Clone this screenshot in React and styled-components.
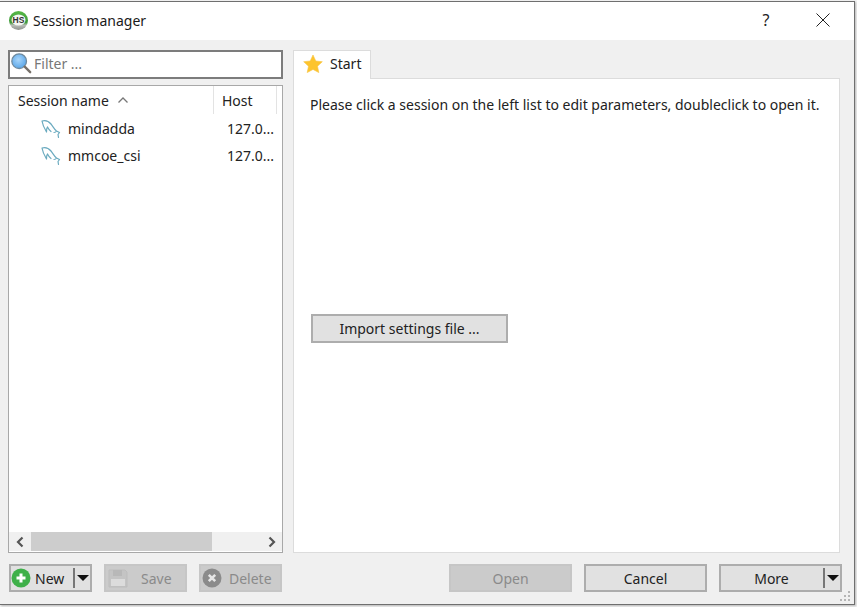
import React from "react";
import styled, { createGlobalStyle } from "styled-components";

const Global = createGlobalStyle`
  html, body { margin: 0; padding: 0; background: #f3f3f3; }
  body { width: 857px; height: 607px; overflow: hidden; font-family: "Noto Sans", "Open Sans", sans-serif; }
  * { box-sizing: border-box; }
`;

const Window = styled.div`
  width: 855px;
  height: 604px;
  margin-top: 1px;
  border-top: 1px solid #6f6f6f;
  border-right: 1px solid #6f6f6f;
  border-bottom: 1px solid #6f6f6f;
  background: #f0f0f0;
  display: flex;
  flex-direction: column;
  box-shadow: 1px 1px 2px rgba(0, 0, 0, 0.25);
`;
const TitleBar = styled.div`
  height: 38px;
  flex: none;
  background: #fff;
  display: flex;
  align-items: center;
  padding: 0 0 2px 9px;
  color: #1a1a1a;
  font-size: 14px;
`;
const TitleText = styled.span`
  margin-left: 5px;
  flex: 1;
`;
const TitleButton = styled.button`
  width: 46px;
  height: 36px;
  border: 0;
  padding: 0;
  background: none;
  display: flex;
  align-items: center;
  justify-content: center;
  font: 16px "Noto Sans", sans-serif;
  color: #222;
`;
const Help = styled(TitleButton)`margin-right: 11px;`;
const Close = styled(TitleButton)`margin-right: 8px;`;
const Content = styled.div`
  flex: none;
  display: grid;
  grid-template-columns: 275px 547px;
  column-gap: 10px;
  padding: 10px 0 0 8px;
`;
const LeftColumn = styled.div`
  display: flex;
  flex-direction: column;
  height: 503px;
`;
const FilterBox = styled.div`
  height: 29px;
  flex: none;
  background: #fff;
  border: 2px solid #7c7c7c;
  display: flex;
  align-items: center;
  font-size: 14px;
  color: #777;
  gap: 2px;
  padding-bottom: 3px;
`;
const Tree = styled.div`
  margin-top: 6px;
  height: 468px;
  flex: none;
  background: #fff;
  border: 1.5px solid #a8a8a8;
  display: flex;
  flex-direction: column;
`;
const TreeHeader = styled.div`
  height: 28px;
  flex: none;
  display: grid;
  grid-template-columns: 205px 63px;
  font-size: 14px;
  color: #222;
`;
const HeaderCell = styled.div`
  display: flex;
  align-items: center;
  gap: 8px;
  padding-left: ${(p) => p.$pad}px;
  border-right: 1px solid #e3e3e3;
`;
const Rows = styled.div`
  flex: 1;
  padding-top: 1px;
`;
const Row = styled.div`
  height: 27px;
  display: grid;
  grid-template-columns: 218px 55px;
  align-items: center;
  font-size: 14px;
  color: #222;
`;
const NameCell = styled.div`
  display: flex;
  align-items: center;
  padding-left: 32px;
  gap: 7px;
`;
const Scrollbar = styled.div`
  height: 19px;
  margin-bottom: 1px;
  flex: none;
  background: #f0f0f0;
  display: grid;
  grid-template-columns: 22px 1fr 21px;
  align-items: center;
  justify-items: center;
`;
const ScrollTrack = styled.div`
  width: 100%;
  height: 19px;
`;
const ScrollThumb = styled.div`
  width: 181px;
  height: 100%;
  background: #cdcdcd;
`;
const RightColumn = styled.div`
  display: flex;
  flex-direction: column;
  height: 503px;
`;
const Tabs = styled.div`
  height: 28px;
  flex: none;
  display: flex;
`;
const Tab = styled.div`
  width: 78px;
  background: #fff;
  border: 1px solid #dcdcdc;
  border-bottom: 0;
  display: flex;
  align-items: center;
  padding: 0 0 3px 9px;
  gap: 7px;
  font-size: 14px;
  color: #222;
  position: relative;
  z-index: 1;
  margin-bottom: -1px;
`;
const Panel = styled.div`
  flex: 1;
  background: #fff;
  border: 1px solid #dcdcdc;
  padding: 16px 0 0 16px;
  font-size: 14px;
  color: #222;
  display: flex;
  flex-direction: column;
`;
const Message = styled.div`
  line-height: 20px;
  white-space: nowrap;
`;
const ImportButton = styled.button`
  margin-top: 199px;
  margin-left: 1px;
  width: 197px;
  height: 29px;
  background: #e1e1e1;
  border: 2px solid #adadad;
  font: 14px "Noto Sans", sans-serif;
  color: #222;
  padding: 0;
`;
const Footer = styled.div`
  display: flex;
  padding: 11px 0 0 9px;
  align-items: stretch;
  height: 39px;
  flex: none;
`;
const LeftActions = styled.div`
  display: flex;
  gap: 12px;
`;
const RightActions = styled.div`
  display: flex;
  gap: 12px;
  margin-left: 167px;
`;
const Btn = styled.button`
  height: 28px;
  width: ${(p) => p.$w || 83}px;
  padding: 0 ${(p) => p.$pr || 0}px 0 0;
  border: 2px solid ${(p) => (p.disabled ? "#c6c6c6" : "#adadad")};
  background: ${(p) => (p.disabled ? "#cbcbcb" : "#e1e1e1")};
  color: ${(p) => (p.disabled ? "#8a8a8a" : "#222")};
  font: 14px "Noto Sans", sans-serif;
  display: flex;
  align-items: center;
  justify-content: center;
  position: relative;
`;
const IconBtn = styled(Btn)`
  justify-content: flex-start;
  padding-left: ${(p) => p.$pl ?? 1}px;
  gap: ${(p) => p.$gap}px;
`;
const SplitPart = styled.span`
  position: absolute;
  right: 0;
  top: 2px;
  bottom: 2px;
  width: 17px;
  border-left: 2px solid #777;
  display: flex;
  align-items: center;
  justify-content: center;
`;
const Arrow = styled.span`
  width: 0;
  height: 0;
  border-left: 6px solid transparent;
  border-right: 6px solid transparent;
  border-top: 6px solid #111;
`;
const Grip = styled.svg`
  position: absolute;
  right: 3px;
  bottom: 2px;
`;
const Stage = styled.div`
  position: relative;
  flex: 1;
  display: flex;
  flex-direction: column;
  min-height: 0;
`;

const Logo = () => (
  <svg width="19" height="19" viewBox="0 0 19 19">
    <defs>
      <linearGradient id="lg" x1="0" y1="0" x2="0" y2="1">
        <stop offset="0" stopColor="#57b947" />
        <stop offset="0.6" stopColor="#3f9a3a" />
        <stop offset="0.75" stopColor="#b9bdb8" />
        <stop offset="1" stopColor="#8e928d" />
      </linearGradient>
    </defs>
    <circle cx="9.5" cy="9.5" r="9.5" fill="url(#lg)" />
    <ellipse cx="9.5" cy="9" rx="7" ry="5.6" fill="#f4f6f3" />
    <text x="9.5" y="12" fontSize="8.5" fontWeight="700" textAnchor="middle" fill="#333" fontFamily="Liberation Sans, sans-serif">HS</text>
  </svg>
);
const Magnifier = () => (
  <svg width="22" height="22" viewBox="0 0 24 24">
    <defs>
      <radialGradient id="mg" cx="0.45" cy="0.4" r="0.7">
        <stop offset="0" stopColor="#a9d6fa" />
        <stop offset="1" stopColor="#4d9ee6" />
      </radialGradient>
    </defs>
    <circle cx="10" cy="10" r="8" fill="url(#mg)" stroke="#6f8a9e" strokeWidth="1.4" />
    <path d="M16 16 L22 22" stroke="#77716a" strokeWidth="2.6" strokeLinecap="round" />
  </svg>
);
const Dolphin = () => (
  <svg width="20" height="20" viewBox="0 0 20 20" fill="none" stroke="#6aaabf" strokeWidth="1.2">
    <path d="M1 2 C4 1 7.5 2 10 5 C12 7.5 13 10 15.5 12 L18.5 13.5 L17 15.5 L17.5 18.5 M15.5 12 C15 13 14.5 13.5 13 13.5 M1 2 C1.5 5 3 9 5.5 13 C5.5 11 5.5 9 6.5 8 C7.5 10 8.5 11.5 10 12.5" strokeLinecap="round" strokeLinejoin="round" />
  </svg>
);
const SortUp = () => (
  <svg width="12" height="8" viewBox="0 0 12 8" fill="none" stroke="#777" strokeWidth="1.3">
    <path d="M1.5 6.5 L6 2 L10.5 6.5" />
  </svg>
);
const Chevron = ({ dir }) => (
  <svg width="10" height="12" viewBox="0 0 10 12" fill="none" stroke="#555" strokeWidth="2.2">
    <path d={dir === "l" ? "M7.5 1.5 L3 6 L7.5 10.5" : "M2.5 1.5 L7 6 L2.5 10.5"} />
  </svg>
);
const Star = () => (
  <svg width="20" height="20" viewBox="0 0 20 20">
    <polygon points="10,1 12.8,7 19.3,7.7 14.5,12.2 15.8,18.6 10,15.4 4.2,18.6 5.5,12.2 0.7,7.7 7.2,7" fill="#fdc42d" stroke="#f6c544" strokeWidth="0.6" strokeLinejoin="round" />
  </svg>
);
const PlusIcon = () => (
  <svg width="20" height="20" viewBox="0 0 20 20">
    <circle cx="10" cy="10" r="9.5" fill="#3fb04a" />
    <path d="M10 5.5 V14.5 M5.5 10 H14.5" stroke="#fff" strokeWidth="3" />
  </svg>
);
const DiskIcon = () => (
  <svg width="22" height="22" viewBox="0 0 22 22">
    <path d="M2 3 H18 L20 5 V20 H2 Z" fill="#c4c4c4" stroke="#bdbdbd" />
    <rect x="6" y="3" width="9" height="6" fill="#b8b8b8" />
    <rect x="4" y="12" width="14" height="7" fill="#dcdcdc" />
  </svg>
);
const DeleteIcon = () => (
  <svg width="20" height="20" viewBox="0 0 20 20">
    <circle cx="10" cy="10" r="9.5" fill="#8b8b8b" />
    <path d="M6.8 6.8 L13.2 13.2 M13.2 6.8 L6.8 13.2" stroke="#e6e6e6" strokeWidth="2.6" />
  </svg>
);
const CloseIcon = () => (
  <svg width="14" height="14" viewBox="0 0 14 14" fill="none" stroke="#222" strokeWidth="1">
    <path d="M0.5 0.5 L13.5 13.5 M13.5 0.5 L0.5 13.5" />
  </svg>
);
const GripIcon = () => (
  <Grip width="12" height="12" viewBox="0 0 12 12" fill="#b5b5b5">
    <rect x="9" y="1" width="2" height="2" />
    <rect x="5" y="5" width="2" height="2" />
    <rect x="9" y="5" width="2" height="2" />
    <rect x="1" y="9" width="2" height="2" />
    <rect x="5" y="9" width="2" height="2" />
    <rect x="9" y="9" width="2" height="2" />
  </Grip>
);

const sessions = [
  { name: "mindadda", host: "127.0..." },
  { name: "mmcoe_csi", host: "127.0..." },
];

export default function App() {
  return (
    <>
      <Global />
      <Window>
        <TitleBar>
          <Logo />
          <TitleText>Session manager</TitleText>
          <Help>?</Help>
          <Close><CloseIcon /></Close>
        </TitleBar>
        <Stage>
          <Content>
            <LeftColumn>
              <FilterBox>
                <Magnifier />
                Filter ...
              </FilterBox>
              <Tree>
                <TreeHeader>
                  <HeaderCell $pad={9}>Session name <SortUp /></HeaderCell>
                  <HeaderCell $pad={8}>Host</HeaderCell>
                </TreeHeader>
                <Rows>
                  {sessions.map((s) => (
                    <Row key={s.name}>
                      <NameCell><Dolphin />{s.name}</NameCell>
                      <div>{s.host}</div>
                    </Row>
                  ))}
                </Rows>
                <Scrollbar>
                  <Chevron dir="l" />
                  <ScrollTrack><ScrollThumb /></ScrollTrack>
                  <Chevron dir="r" />
                </Scrollbar>
              </Tree>
            </LeftColumn>
            <RightColumn>
              <Tabs>
                <Tab><Star />Start</Tab>
              </Tabs>
              <Panel>
                <Message>Please click a session on the left list to edit parameters, doubleclick to open it.</Message>
                <ImportButton>Import settings file ...</ImportButton>
              </Panel>
            </RightColumn>
          </Content>
          <Footer>
            <LeftActions>
              <IconBtn $pl={0} $gap={4}><PlusIcon />New<SplitPart><Arrow /></SplitPart></IconBtn>
              <IconBtn disabled $gap={12}><DiskIcon />Save</IconBtn>
              <IconBtn disabled $gap={7}><DeleteIcon />Delete</IconBtn>
            </LeftActions>
            <RightActions>
              <Btn disabled $w={123}>Open</Btn>
              <Btn $w={123}>Cancel</Btn>
              <Btn $w={123} $pr={18}>More<SplitPart><Arrow /></SplitPart></Btn>
            </RightActions>
          </Footer>
          <GripIcon />
        </Stage>
      </Window>
    </>
  );
}
